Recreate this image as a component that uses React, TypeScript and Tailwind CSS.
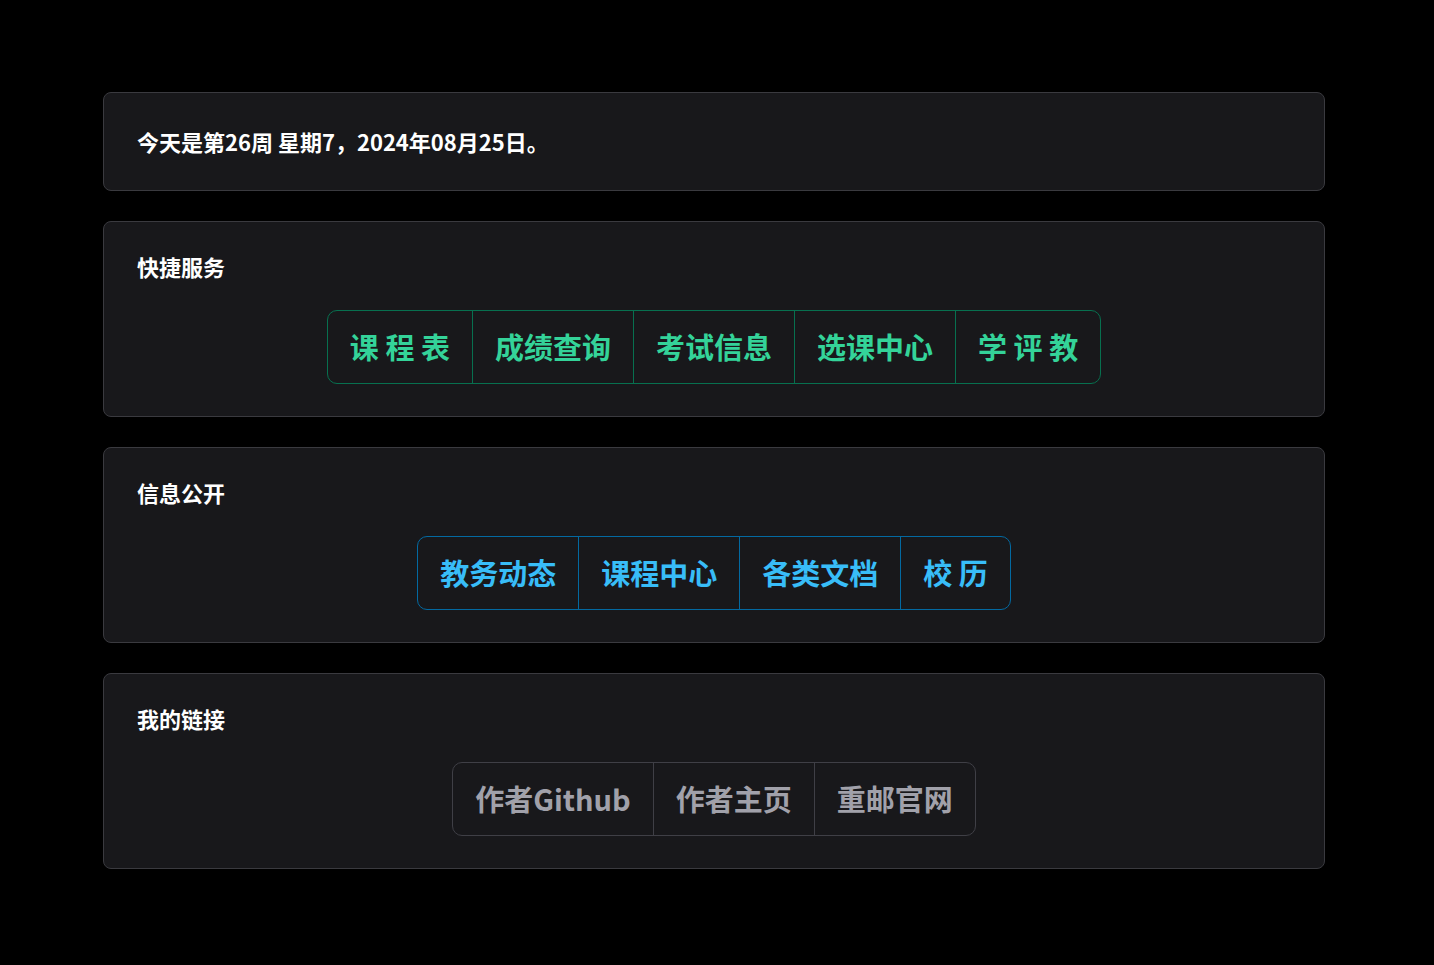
import React from "react";

type Tone = "green" | "blue" | "gray";

const tones: Record<Tone, { group: string; item: string }> = {
  green: {
    group: "border-[#07704f]",
    item: "text-[#34d399] border-[#07704f]",
  },
  blue: {
    group: "border-[#0369a1]",
    item: "text-[#38bdf8] border-[#0369a1]",
  },
  gray: {
    group: "border-[#3f3f46]",
    item: "text-[#a1a1aa] border-[#3f3f46]",
  },
};

const ButtonGroup = ({ items, tone }: { items: string[]; tone: Tone }) => {
  const t = tones[tone];
  return (
    <div className="flex justify-center mt-[30px]">
      <div className={`flex border rounded-[10px] overflow-hidden ${t.group}`}>
        {items.map((label, i) => (
          <button
            key={label}
            className={`h-[72px] px-[22px] flex items-center text-[29px] font-bold whitespace-pre ${t.item} ${
              i > 0 ? "border-l" : ""
            }`}
          >
            {label}
          </button>
        ))}
      </div>
    </div>
  );
};

const Card = ({ title, children }: { title: string; children?: React.ReactNode }) => (
  <div className="w-[1222px] bg-[#18181b] border border-[#3a3a3f] rounded-lg px-[33px] pt-[30px] pb-[32px]">
    <div className="text-[22px] leading-[28px] font-bold text-white">{title}</div>
    {children}
  </div>
);

export default function App() {
  return (
    <div
      className="min-h-screen bg-black pl-[103px] pt-[92px] pb-[96px] flex flex-col gap-[30px]"
      style={{ fontFamily: '"Noto Sans CJK SC", "Noto Sans", sans-serif' }}
    >
      <div className="w-[1222px] bg-[#18181b] border border-[#3a3a3f] rounded-lg px-[33px] py-[33px]">
        <div className="text-[22px] leading-[31px] font-bold text-white">
          今天是第26周 星期7，2024年08月25日。
        </div>
      </div>

      <Card title="快捷服务">
        <ButtonGroup tone="green" items={["课 程 表", "成绩查询", "考试信息", "选课中心", "学 评 教"]} />
      </Card>

      <Card title="信息公开">
        <ButtonGroup tone="blue" items={["教务动态", "课程中心", "各类文档", "校 历"]} />
      </Card>

      <Card title="我的链接">
        <ButtonGroup tone="gray" items={["作者Github", "作者主页", "重邮官网"]} />
      </Card>
    </div>
  );
}
